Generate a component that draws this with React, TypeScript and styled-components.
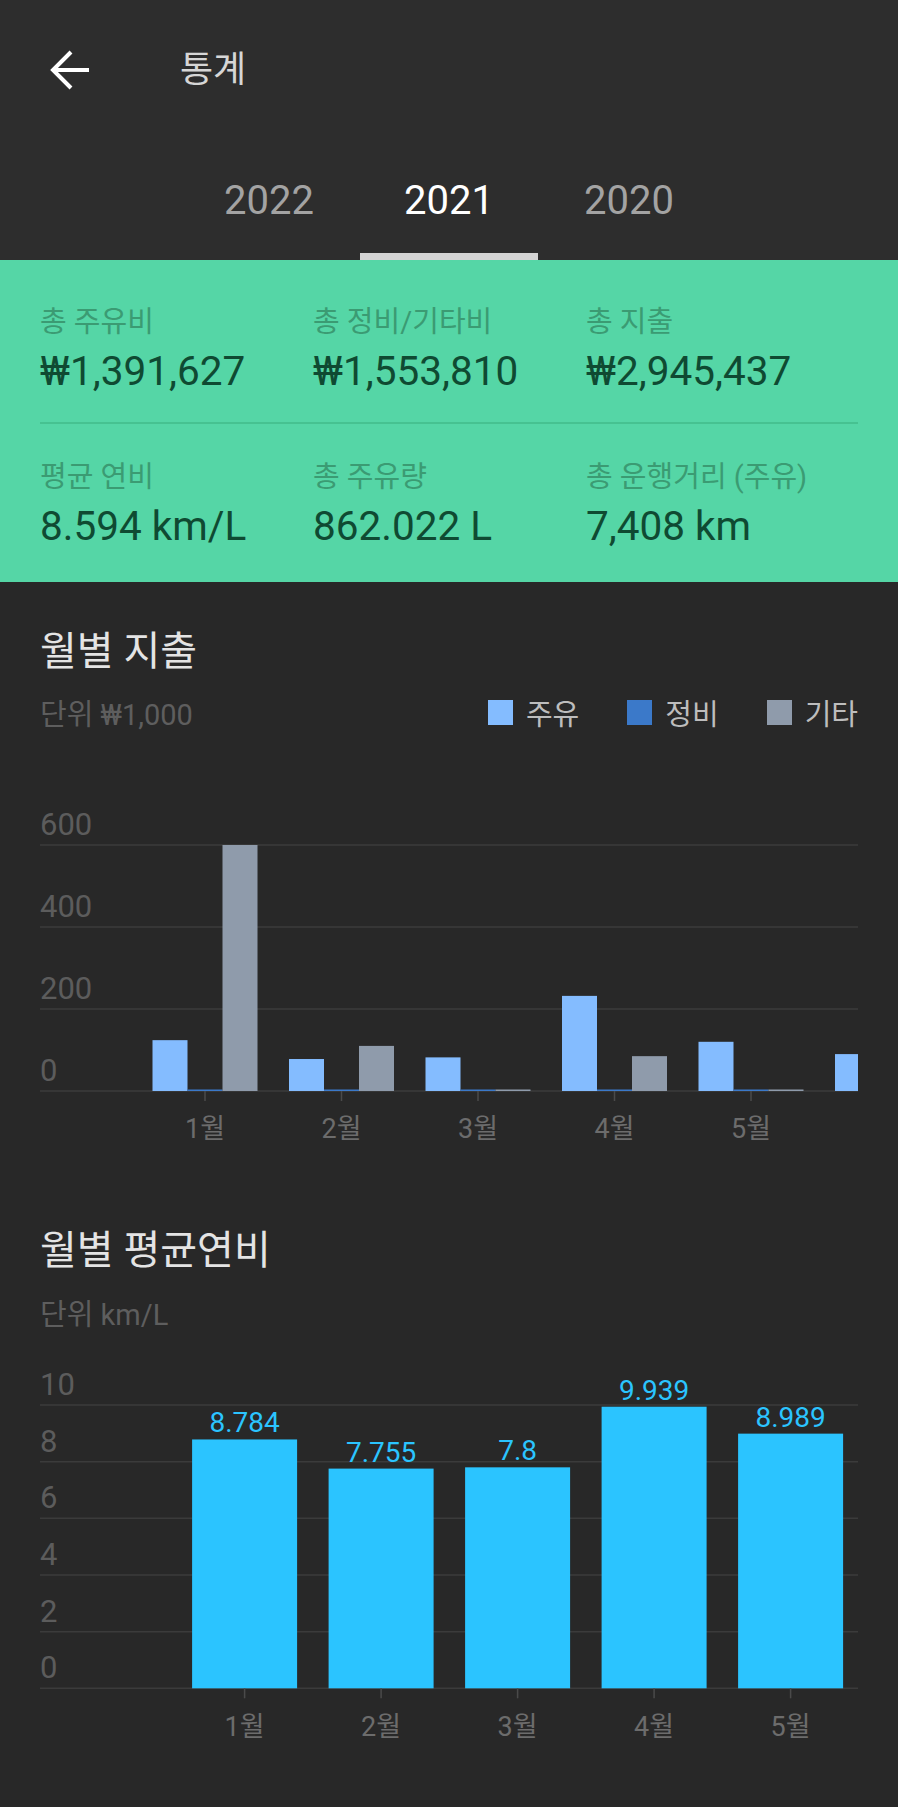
import React from "react";
import styled, { createGlobalStyle } from "styled-components";

const FONT = `Roboto, "Noto Sans CJK KR", sans-serif`;

const GlobalStyle = createGlobalStyle`
  html, body {
    margin: 0;
    padding: 0;
    background: #282828;
  }
  body {
    font-family: ${FONT};
    -webkit-font-smoothing: antialiased;
  }
`;

// data
const summaryTop = [
  { label: "총 주유비", value: "₩1,391,627" },
  { label: "총 정비/기타비", value: "₩1,553,810" },
  { label: "총 지출", value: "₩2,945,437" },
];

const summaryBottom = [
  { label: "평균 연비", value: "8.594 km/L" },
  { label: "총 주유량", value: "862.022 L" },
  { label: "총 운행거리 (주유)", value: "7,408 km" },
];

const SERIES = [
  { name: "주유", color: "#84bcff" },
  { name: "정비", color: "#3b79c9" },
  { name: "기타", color: "#8f9bab" },
];

const expenses = [
  { month: "1월", values: [124, 0, 600] },
  { month: "2월", values: [78, 0, 110] },
  { month: "3월", values: [82, 0, 0] },
  { month: "4월", values: [232, 0, 85] },
  { month: "5월", values: [120, 0, 0] },
  { month: "", values: [90, 0, 0] },
];

const efficiency = [
  { month: "1월", value: 8.784 },
  { month: "2월", value: 7.755 },
  { month: "3월", value: 7.8 },
  { month: "4월", value: 9.939 },
  { month: "5월", value: 8.989 },
];

const CHART_W = 818;
const STEP = 136.5;

const ExpenseChart = () => {
  const base = 359;
  const unit = 0.41;
  const first = 165;
  return (
    <ChartSvg width={CHART_W} height={428}>
      {[0, 200, 400, 600].map((t) => (
        <g key={t}>
          <GridLine x1={0} x2={CHART_W} y1={base - t * unit} y2={base - t * unit} />
          <AxisText x={0} y={base - t * unit - 10}>
            {t}
          </AxisText>
        </g>
      ))}
      {expenses.map((m, i) => {
        const cx = first + STEP * i;
        return (
          <g key={i}>
            {m.values.map((v, j) => {
              const h = Math.max(v * unit, 1.5);
              return (
                <rect
                  key={j}
                  x={cx - 52.5 + j * 35}
                  y={base - h}
                  width={35}
                  height={h}
                  fill={SERIES[j].color}
                />
              );
            })}
            {m.month && (
              <>
                <Tick x1={cx} x2={cx} y1={base} y2={base + 10} />
                <MonthText x={cx} y={406}>
                  {m.month}
                </MonthText>
              </>
            )}
          </g>
        );
      })}
    </ChartSvg>
  );
};

const EfficiencyChart = () => {
  const base = 356.3;
  const unit = 28.33;
  const first = 204.6;
  return (
    <ChartSvg width={CHART_W} height={428}>
      {[0, 2, 4, 6, 8, 10].map((t) => (
        <g key={t}>
          <GridLine x1={0} x2={CHART_W} y1={base - t * unit} y2={base - t * unit} />
          <AxisText x={0} y={base - t * unit - 10}>
            {t}
          </AxisText>
        </g>
      ))}
      {efficiency.map((m, i) => {
        const cx = first + STEP * i;
        const h = m.value * unit;
        return (
          <g key={m.month}>
            <rect x={cx - 52.5} y={base - h} width={105} height={h} fill="#2bc4ff" />
            <ValueText x={cx} y={base - h - 7}>
              {m.value}
            </ValueText>
            <Tick x1={cx} x2={cx} y1={base} y2={base + 10} />
            <MonthText x={cx} y={404}>
              {m.month}
            </MonthText>
          </g>
        );
      })}
    </ChartSvg>
  );
};

export default function App() {
  return (
    <>
      <GlobalStyle />
      <Page>
        <Header>
          <Toolbar>
            <BackButton aria-label="뒤로">
              <svg width="40" height="40" viewBox="0 0 40 40" fill="none">
                <path
                  d="M39 20H3M21 2L3 20L21 38"
                  stroke="#ffffff"
                  strokeWidth="4"
                  strokeLinejoin="miter"
                />
              </svg>
            </BackButton>
            <Title>통계</Title>
          </Toolbar>
          <Tabs>
            <Tab>2022</Tab>
            <Tab $active>2021</Tab>
            <Tab>2020</Tab>
          </Tabs>
        </Header>

        <Summary>
          <StatGrid>
            {summaryTop.map((s) => (
              <div key={s.label}>
                <StatLabel>{s.label}</StatLabel>
                <StatValue>{s.value}</StatValue>
              </div>
            ))}
          </StatGrid>
          <Divider />
          <StatGrid>
            {summaryBottom.map((s) => (
              <div key={s.label}>
                <StatLabel>{s.label}</StatLabel>
                <StatValue>{s.value}</StatValue>
              </div>
            ))}
          </StatGrid>
        </Summary>

        <Section>
          <SectionTitle>월별 지출</SectionTitle>
          <SubRow>
            <Unit>단위 ₩1,000</Unit>
            <Legend>
              {SERIES.map((s) => (
                <LegendItem key={s.name}>
                  <Swatch $color={s.color} />
                  {s.name}
                </LegendItem>
              ))}
            </Legend>
          </SubRow>
          <ExpenseChart />
        </Section>

        <Section $gap={66}>
          <SectionTitle>월별 평균연비</SectionTitle>
          <SubRow $gap={16}>
            <Unit>단위 km/L</Unit>
          </SubRow>
          <EfficiencyChart />
        </Section>
      </Page>
    </>
  );
}

const Page = styled.div`
  width: 898px;
  min-height: 1807px;
  background: #282828;
`;

const Header = styled.header`
  background: #2d2d2d;
`;

const Toolbar = styled.div`
  height: 140px;
  display: flex;
  align-items: center;
  padding-left: 50px;
`;

const BackButton = styled.button`
  width: 40px;
  height: 40px;
  padding: 0;
  border: 0;
  background: none;
  display: flex;
`;

const Title = styled.h1`
  margin: 0 0 0 90px;
  font-size: 36px;
  font-weight: 400;
  line-height: 40px;
  color: #d6d6d6;
`;

const Tabs = styled.nav`
  height: 120px;
  display: flex;
  justify-content: center;
`;

const Tab = styled.div<{ $active?: boolean }>`
  position: relative;
  width: 180px;
  display: flex;
  align-items: center;
  justify-content: center;
  font-size: 40px;
  color: ${(p) => (p.$active ? "#ffffff" : "#a3a3a3")};

  &::after {
    content: "";
    position: absolute;
    left: 1px;
    right: 1px;
    bottom: 0;
    height: 7px;
    background: ${(p) => (p.$active ? "#d4d4d4" : "transparent")};
  }
`;

const Summary = styled.section`
  background: #55d6a6;
  padding: 42px 40px 32px;
`;

const StatGrid = styled.div`
  display: grid;
  grid-template-columns: 273px 273px 1fr;
`;

const StatLabel = styled.div`
  font-size: 29px;
  line-height: 40px;
  color: #3b9b73;
  white-space: nowrap;
`;

const StatValue = styled.div`
  margin-top: 5px;
  font-size: 40.5px;
  line-height: 48px;
  color: #0f4a32;
  white-space: nowrap;
`;

const Divider = styled.hr`
  border: 0;
  height: 2px;
  background: #46c291;
  margin: 27px 0 33px;
`;

const Section = styled.section<{ $gap?: number }>`
  padding: ${(p) => p.$gap ?? 45}px 40px 0;
`;

const SectionTitle = styled.h2`
  margin: 0;
  font-size: 40px;
  font-weight: 400;
  line-height: 50px;
  color: #e4e4e4;
`;

const SubRow = styled.div<{ $gap?: number }>`
  margin-top: ${(p) => p.$gap ?? 15}px;
  height: 40px;
  display: flex;
  align-items: center;
  justify-content: space-between;
`;

const Unit = styled.span`
  font-size: 29px;
  color: #5e5e5e;
`;

const Legend = styled.div`
  display: flex;
  align-items: center;
  gap: 48px;
`;

const LegendItem = styled.div`
  display: flex;
  align-items: center;
  gap: 13px;
  font-size: 29px;
  color: #bdbdbd;
`;

const Swatch = styled.span<{ $color: string }>`
  width: 25px;
  height: 25px;
  background: ${(p) => p.$color};
`;

const ChartSvg = styled.svg`
  display: block;
  overflow: hidden;
`;

const GridLine = styled.line`
  stroke: #3b3b3b;
  stroke-width: 1.5;
`;

const Tick = styled.line`
  stroke: #4a4a4a;
  stroke-width: 1.5;
`;

const AxisText = styled.text`
  font-family: ${FONT};
  font-size: 31px;
  fill: #5c5c5c;
`;

const MonthText = styled.text`
  font-family: ${FONT};
  font-size: 27px;
  fill: #6c6c6c;
  text-anchor: middle;
`;

const ValueText = styled.text`
  font-family: ${FONT};
  font-size: 28px;
  fill: #2bc4ff;
  text-anchor: middle;
`;
